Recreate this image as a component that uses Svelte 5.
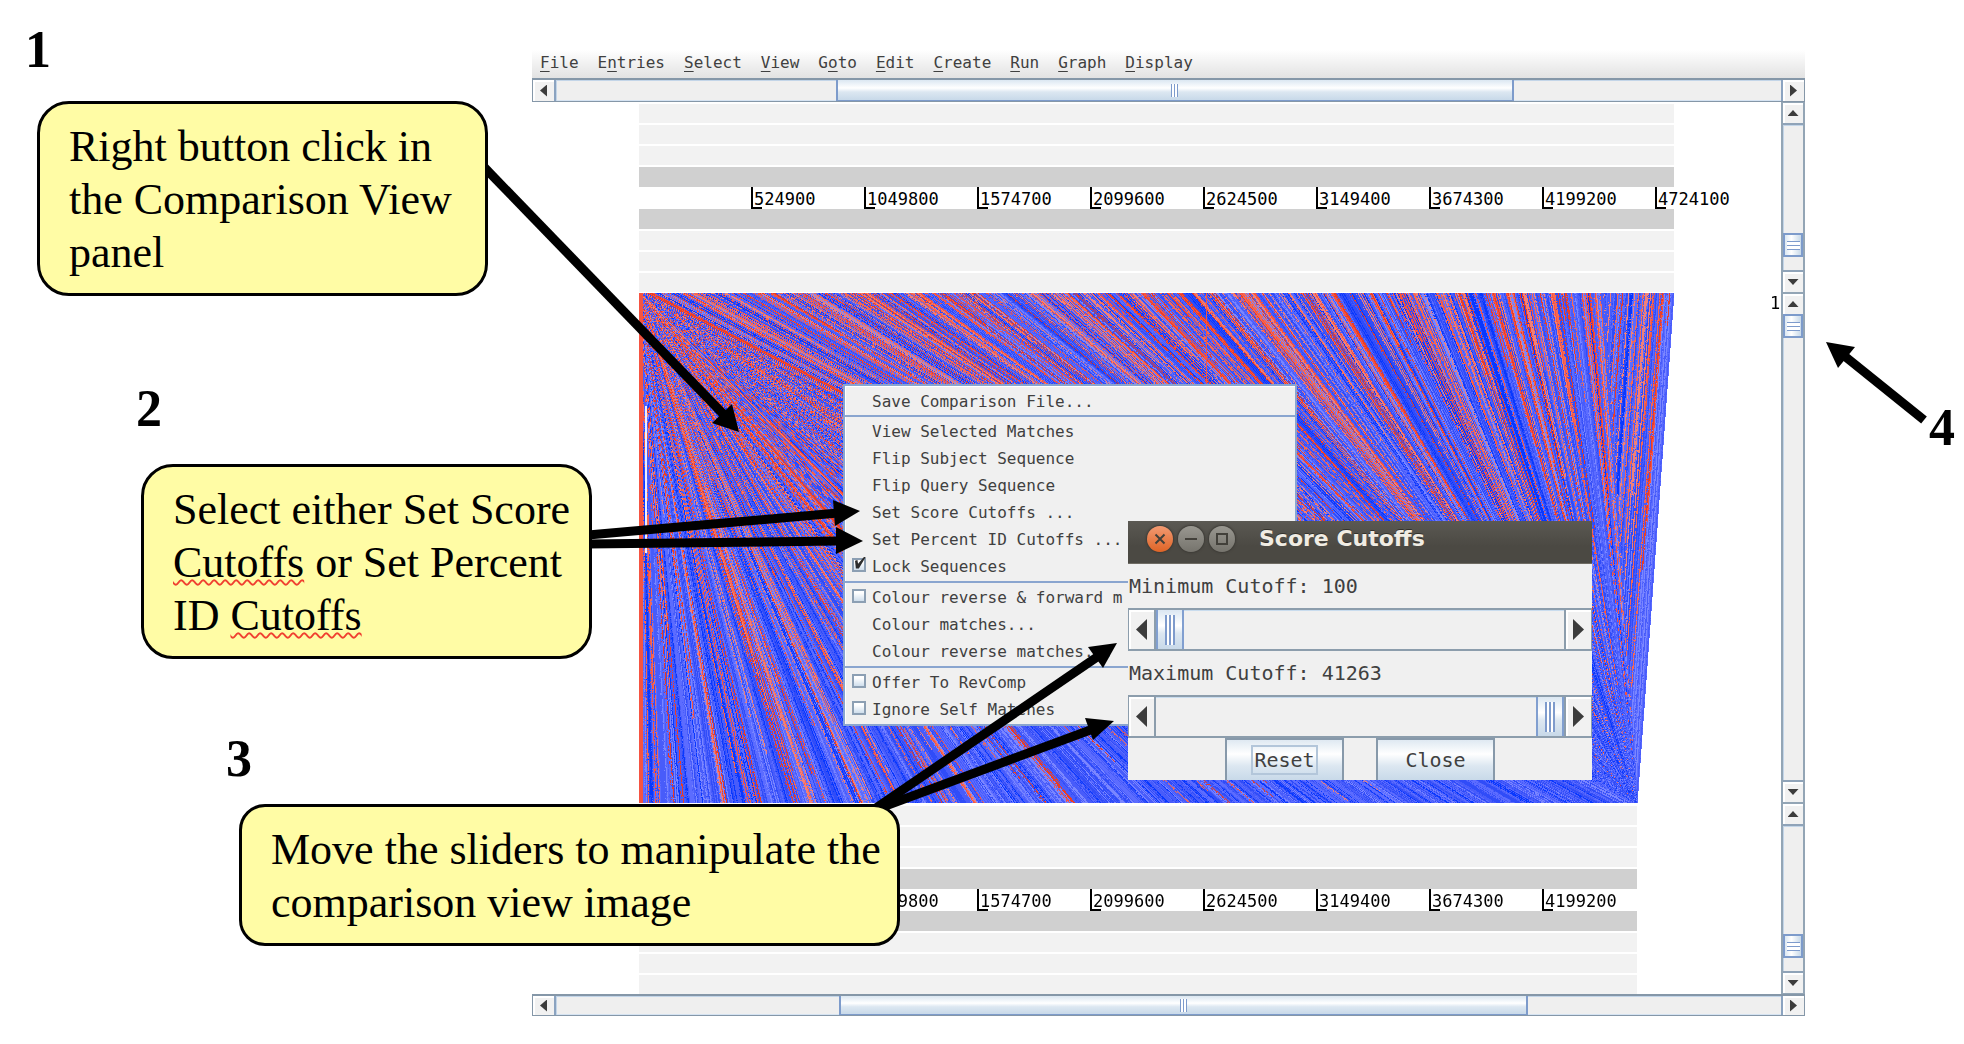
<script>
  import { onMount } from 'svelte';

  const menus = [
    ['', 'F', 'ile'], ['E', 'n', 'tries'], ['', 'S', 'elect'], ['', 'V', 'iew'], ['G', 'o', 'to'],
    ['', 'E', 'dit'], ['', 'C', 'reate'], ['', 'R', 'un'], ['', 'G', 'raph'], ['', 'D', 'isplay']
  ];
  const ticks = [524900, 1049800, 1574700, 2099600, 2624500, 3149400, 3674300, 4199200, 4724100];

  const popup = [
    [{ label: 'Save Comparison File...' }],
    [
      { label: 'View Selected Matches' },
      { label: 'Flip Subject Sequence' },
      { label: 'Flip Query Sequence' },
      { label: 'Set Score Cutoffs ...' },
      { label: 'Set Percent ID Cutoffs ...' },
      { label: 'Lock Sequences', check: true, on: true }
    ],
    [
      { label: 'Colour reverse & forward m', check: true },
      { label: 'Colour matches...' },
      { label: 'Colour reverse matches...' }
    ],
    [
      { label: 'Offer To RevComp', check: true },
      { label: 'Ignore Self Matches', check: true }
    ]
  ];

  const arrows = [
    { line: [484, 167, 728, 419], head: '739,432 712,423 732,404' },
    { line: [588, 535, 838, 513], head: '860,511 833,500 835,526' },
    { line: [588, 544, 838, 541], head: '863,541 836,527 836,554' },
    { line: [876, 808, 1100, 655], head: '1117,643 1088,647 1103,668' },
    { line: [880, 808, 1093, 729], head: '1114,721 1085,718 1093,740' },
    { line: [1924, 420, 1842, 354], head: '1826,342 1855,347 1838,368' }
  ];

  let minimum = $state(100);
  let maximum = $state(41263);
  let canvas;

  function hash(n) {
    let h = Math.imul(n | 0, 374761393) + 668265263;
    h = Math.imul(h ^ (h >>> 13), 1274126177);
    h = Math.imul(h ^ (h >>> 16), 2246822519);
    return ((h ^ (h >>> 15)) >>> 0) / 4294967296;
  }

  const blues = [[8, 56, 255], [48, 76, 248], [72, 92, 250], [92, 108, 255], [122, 134, 255]];
  const reds = [[232, 62, 40], [245, 84, 66], [244, 104, 84], [240, 128, 120]];

  // Match bands fan out from the top-left corner and gather at the bottom-right one.
  onMount(() => {
    const w = 1035, h = 510, inset = 37;
    const ctx = canvas.getContext('2d');
    const image = ctx.createImageData(w, h);
    for (let y = 0; y < h; y++) {
      const f = (y + 1) / (h + 2);
      const right = w - inset * f;
      for (let x = 0; x < right; x++) {
        const cx = w - inset;
        const above = x > cx * f;
        const speck = hash(x * 7919 + y * 104729);
        let u = above ? (x - cx * f) / (1 - f) : x / f + 5000;
        if (above && u > w - 70) u = w + x - right;
        if (speck > 0.86) u += 2;
        const band = Math.floor(u / 1.2);
        const wide = hash(Math.floor(u / 6) + 90001);
        const pull = above ? 0.48 - (0.1 * x) / w : 0.52 - (0.2 * x) / w;
        const limit = (pull - 0.38 * f) * (0.5 + wide);
        let c;
        if (x < 4 || (x === 567 && y < 400)) c = reds[1];
        else if (hash(band) < limit) c = reds[Math.floor(hash(band + 333333) * 4)];
        else c = blues[Math.floor((hash(band + 777777) * 0.7 + wide * 0.3) * 5)];
        if (x > 5 && x < 8 && y > 112 && y < 260) c = [235, 238, 255];
        const i = (y * w + x) * 4;
        image.data[i] = c[0];
        image.data[i + 1] = c[1];
        image.data[i + 2] = c[2];
        image.data[i + 3] = 255;
      }
    }
    ctx.putImageData(image, 0, 0);
  });
</script>

{#snippet arrow(dir)}
  <button class="step {dir}" aria-label="Scroll {dir}"><span></span></button>
{/snippet}

{#snippet vbar(before, after)}
  <div class="vbar">
    {@render arrow('up')}
    <div class="track">
      <div style:flex-grow={before}></div>
      <div class="thumb"></div>
      <div style:flex-grow={after}></div>
    </div>
    {@render arrow('down')}
  </div>
{/snippet}

{#snippet hbar(before, size, after)}
  <div class="hbar">
    {@render arrow('left')}
    <div class="track">
      <div style:flex-grow={before}></div>
      <div class="thumb" style:flex-grow={size}></div>
      <div style:flex-grow={after}></div>
    </div>
    {@render arrow('right')}
  </div>
{/snippet}

{#snippet sequence(values)}
  <div class="frames"><i></i><i></i><i></i></div>
  <div class="strand"></div>
  <div class="ruler">
    {#each values as v}<span>{v}</span>{/each}
  </div>
  <div class="strand"></div>
  <div class="frames lower"><i></i><i></i><i></i></div>
{/snippet}

<main>
  <section class="app">
    <nav>
      {#each menus as [a, key, b]}<button>{a}<u>{key}</u>{b}</button>{/each}
    </nav>
    {@render hbar(282, 678, 269)}
    <div class="panel">
      <div class="view query">{@render sequence(ticks)}</div>
      {@render vbar(106, 13)}
    </div>
    <div class="panel">
      <div class="view compare"><canvas bind:this={canvas} width="1035" height="510"></canvas></div>
      <span class="lock">1</span>
      {@render vbar(0, 1)}
    </div>
    <div class="panel">
      <div class="view subject">{@render sequence(ticks.slice(0, 8))}</div>
      {@render vbar(106, 13)}
    </div>
    {@render hbar(285, 689, 254)}
  </section>

  <div class="popup">
    {#each popup as group}
      <div class="group">
        {#each group as item}
          {#if item.check}
            <label class="item"><input type="checkbox" checked={item.on} /><span>{item.label}</span></label>
          {:else}
            <button class="item">{item.label}</button>
          {/if}
        {/each}
      </div>
    {/each}
  </div>

  <section class="dialog">
    <header>
      <button class="round close" aria-label="Close window">
        <svg viewBox="0 0 26 26"><path d="M8.500 8.500l9 9M17.500 8.500l-9 9" /></svg>
      </button>
      <button class="round" aria-label="Minimise">
        <svg viewBox="0 0 26 26"><path d="M7 13h12" /></svg>
      </button>
      <button class="round" aria-label="Maximise">
        <svg viewBox="0 0 26 26"><path d="M8 8h10v10H8z" /></svg>
      </button>
      <h2>Score Cutoffs</h2>
    </header>
    <label for="min">Minimum Cutoff: {minimum}</label>
    <div class="slider">
      {@render arrow('left')}
      <input id="min" type="range" min="100" max="41263" bind:value={minimum} />
      {@render arrow('right')}
    </div>
    <label for="max">Maximum Cutoff: {maximum}</label>
    <div class="slider">
      {@render arrow('left')}
      <input id="max" type="range" min="100" max="41263" bind:value={maximum} />
      {@render arrow('right')}
    </div>
    <footer>
      <button><span class="focus">Reset</span></button>
      <button><span>Close</span></button>
    </footer>
  </section>

  <svg class="arrows" aria-hidden="true">
    {#each arrows as { line, head }}
      <line x1={line[0]} y1={line[1]} x2={line[2]} y2={line[3]} />
      <polygon points={head} />
    {/each}
  </svg>

  <b class="num n1">1</b>
  <p class="note c1">Right button click in the Comparison View panel</p>
  <b class="num n2">2</b>
  <p class="note c2">Select either Set Score <span class="typo">Cutoffs</span> or Set Percent ID <span class="typo">Cutoffs</span></p>
  <b class="num n3">3</b>
  <p class="note c3">Move the sliders to manipulate the comparison view image</p>
  <b class="num n4">4</b>
</main>

<style>
  :global(body) { margin: 0; background: #fff; }
  main {
    position: relative;
    box-sizing: border-box;
    min-height: 1044px;
    padding: 50px 159px 28px 532px;
    overflow: hidden;
    font-family: "DejaVu Sans Mono", monospace;
    font-size: 16px;
    color: #404040;
  }
  button {
    font: inherit;
    color: inherit;
    border: 0;
    padding: 0;
    margin: 0;
    background: none;
  }

  nav {
    display: flex;
    align-items: flex-start;
    gap: 19px;
    height: 28px;
    padding-left: 8px;
    background: linear-gradient(#fff, #e2e2e2);
  }
  nav button { line-height: 25px; }
  nav u { text-underline-offset: 3px; text-decoration-thickness: 1px; text-decoration-skip-ink: none; }

  .hbar, .vbar, .slider { display: flex; box-sizing: border-box; background: #efefef; }
  .hbar {
    height: 24px;
    border: solid #8597a8;
    border-width: 2px 1px 1px;
    box-shadow: inset 0 -1px #d5e3f2;
  }
  .hbar:last-child { height: 22px; }
  .vbar { flex: none; flex-direction: column; width: 24px; border: solid #93a5b5; border-width: 1px 2px; }
  .step {
    flex: none;
    display: grid;
    place-items: center;
    width: 21px;
    background: #f1f1f1;
    box-shadow: inset 2px 2px #fff;
  }
  .vbar .step { width: 100%; height: 20px; }
  .step span { width: 7px; height: 12px; background: #3c3c3c; }
  .left span { clip-path: polygon(100% 0, 100% 100%, 0 50%); }
  .right span { clip-path: polygon(0 0, 100% 50%, 0 100%); }
  .up span, .down span { width: 11px; height: 6px; }
  .up span { clip-path: polygon(0 100%, 50% 0, 100% 100%); }
  .down span { clip-path: polygon(0 0, 100% 0, 50% 100%); }
  .track { display: flex; flex: 1; box-shadow: inset 1px 1px #c3d5e8; }
  .hbar .track { border: solid #8ba3c0; border-width: 0 2px; }
  .vbar .track { flex-direction: column; border: solid #8fa3b8; border-width: 2px 0; }
  .thumb { border: 2px solid #7d9bcb; }
  .hbar .thumb {
    border-width: 0 2px 1px;
    background:
      repeating-linear-gradient(90deg, #7e9bcc 0 1px, #fff 1px 3px) center / 7px 13px no-repeat,
      linear-gradient(#dbe7f2, #fff 40%, #dce7f1 60%, #c8d9e9);
  }
  .vbar .thumb {
    flex: none;
    height: 20px;
    margin: -2px 0 -1px;
    background:
      repeating-linear-gradient(#7e9bcc 0 1px, #fff 1px 4px) center / 13px 9px no-repeat,
      linear-gradient(90deg, #dbe7f2, #fff 40%, #c8d9e9);
  }

  .panel { display: flex; }
  .view { flex: 1; margin: 0 107px; min-width: 0; }
  .query { padding: 2px 0 1px; }
  .subject { padding-top: 3px; margin-right: 144px; }
  .compare { margin-right: 97px; display: flex; }
  .query, .subject { font-size: 17px; color: #000; }
  canvas { width: 100%; height: 510px; padding-right: 10px; box-sizing: border-box; }
  .lock { flex: none; width: 11px; margin-left: -11px; line-height: 20px; font-size: 17px; color: #000; }
  .frames { display: grid; gap: 2px; padding-bottom: 2px; background: #fff; }
  .frames.lower { padding: 2px 0 0; }
  .frames i { height: 19px; background: #f2f2f2; }
  .strand { height: 20px; background: #d0d0d0; }
  .ruler { display: flex; height: 22px; padding-left: 112px; }
  .ruler span {
    flex: none;
    box-sizing: border-box;
    width: 113px;
    padding-left: 1px;
    border-left: 2px solid #000;
    line-height: 24px;
    background: linear-gradient(#000, #000) left bottom / 9px 2px no-repeat;
  }
  .ruler span:last-child { margin-right: -113px; }

  .popup {
    position: absolute;
    left: 843px;
    top: 384px;
    width: 454px;
    box-sizing: border-box;
    border: 2px solid #8aa5cf;
    background: #f0f0f0;
    box-shadow: inset 1px 1px #fff;
  }
  .group { padding: 1px 0; border-bottom: 2px solid #8aa5cf; }
  .group:first-child { padding: 2px 0 0; }
  .group:last-child { border: 0; }
  .item { display: flex; align-items: center; width: 100%; height: 27px; padding-left: 27px; box-sizing: border-box; text-align: left; white-space: nowrap; }
  .item input {
    appearance: none;
    flex: none;
    width: 14px;
    height: 14px;
    margin: 0 6px 4px -20px;
    border: 2px solid #8c9fb3;
    background: linear-gradient(#fff 20%, #cfdeec);
    position: relative;
  }
  .item input:checked::after {
    content: "";
    position: absolute;
    inset: -3px -2px 1px 1px;
    background: #2d2d2d;
    clip-path: polygon(0 35%, 22% 30%, 28% 60%, 85% 0, 100% 0, 35% 100%, 8% 100%);
  }

  .dialog {
    position: absolute;
    left: 1128px;
    top: 521px;
    width: 464px;
    background: #f0f0f0;
    font-size: 20px;
  }
  .dialog header {
    display: flex;
    align-items: center;
    gap: 5px;
    height: 43px;
    padding: 0 19px 6px;
    box-sizing: border-box;
    background: linear-gradient(#5b5953, #4b4943 60%);
    color: #f0ece3;
    border-bottom: 1px solid #6f6c64;
  }
  h2 { margin: 0 0 0 19px; font: bold 22px/26px "DejaVu Sans", sans-serif; text-shadow: 0 -1px #33312c; }
  .round { width: 26px; height: 26px; border-radius: 50%; background: linear-gradient(#999790, #76746d); box-shadow: 0 0 2px 1px #3d3b36; }
  .round.close { background: linear-gradient(#f29a72, #df6426); }
  .round svg { display: block; width: 26px; height: 26px; fill: none; stroke: #42403a; stroke-width: 2; }
  .dialog label { display: block; height: 44px; line-height: 44px; padding-left: 1px; }
  .slider { height: 43px; border: solid #8c9dac; border-width: 2px 1px; }
  .slider .step { width: 25px; }
  .slider .step span { width: 11px; height: 21px; }
  .slider input {
    appearance: none;
    flex: 1;
    min-width: 0;
    height: 39px;
    margin: 0;
    border: solid #8c9dac;
    border-width: 0 2px;
    background: #f0f0f0;
    box-shadow: inset 0 1px #c9dcee;
    box-sizing: border-box;
  }
  .slider input::-webkit-slider-thumb {
    appearance: none;
    width: 28px;
    height: 39px;
    border: solid #819fd0;
    border-width: 0 2px;
    background:
      repeating-linear-gradient(90deg, #7e9bcc 0 2px, #fff 2px 4px) center / 10px 30px no-repeat,
      linear-gradient(#dbe7f2, #fff 40%, #dce7f1 60%, #c8d9e9);
  }
  .dialog footer { display: flex; justify-content: center; gap: 32px; }
  .dialog footer button {
    width: 119px;
    height: 42px;
    border: solid #8799aa;
    border-width: 2px 2px 0;
    background: linear-gradient(#dfe9f2, #fff 35%, #dce7f1 65%, #c8d9e9);
  }
  .focus { outline: 2px solid #b3c6da; outline-offset: 1px; }

  .arrows { position: absolute; inset: 0; width: 100%; height: 100%; pointer-events: none; }
  .arrows line { stroke: #000; stroke-width: 9; }

  .note {
    position: absolute;
    margin: 0;
    box-sizing: border-box;
    padding: 16px 9px 14px 29px;
    border: 3px solid #000;
    border-radius: 32px;
    background: #fffca5;
    color: #000;
    font: 44px/53px "Liberation Serif", serif;
  }
  .c1 { left: 37px; top: 101px; width: 451px; }
  .c2 { left: 141px; top: 464px; width: 451px; }
  .c3 { left: 239px; top: 804px; width: 661px; border-radius: 26px; }
  .typo { text-decoration: underline wavy #f04030 2px; text-underline-offset: 2px; text-decoration-skip-ink: none; }
  .num { position: absolute; font: bold 52px/60px "Liberation Serif", serif; color: #000; }
  .n1 { left: 25px; top: 20px; }
  .n2 { left: 136px; top: 379px; }
  .n3 { left: 226px; top: 729px; }
  .n4 { left: 1929px; top: 398px; }
</style>
